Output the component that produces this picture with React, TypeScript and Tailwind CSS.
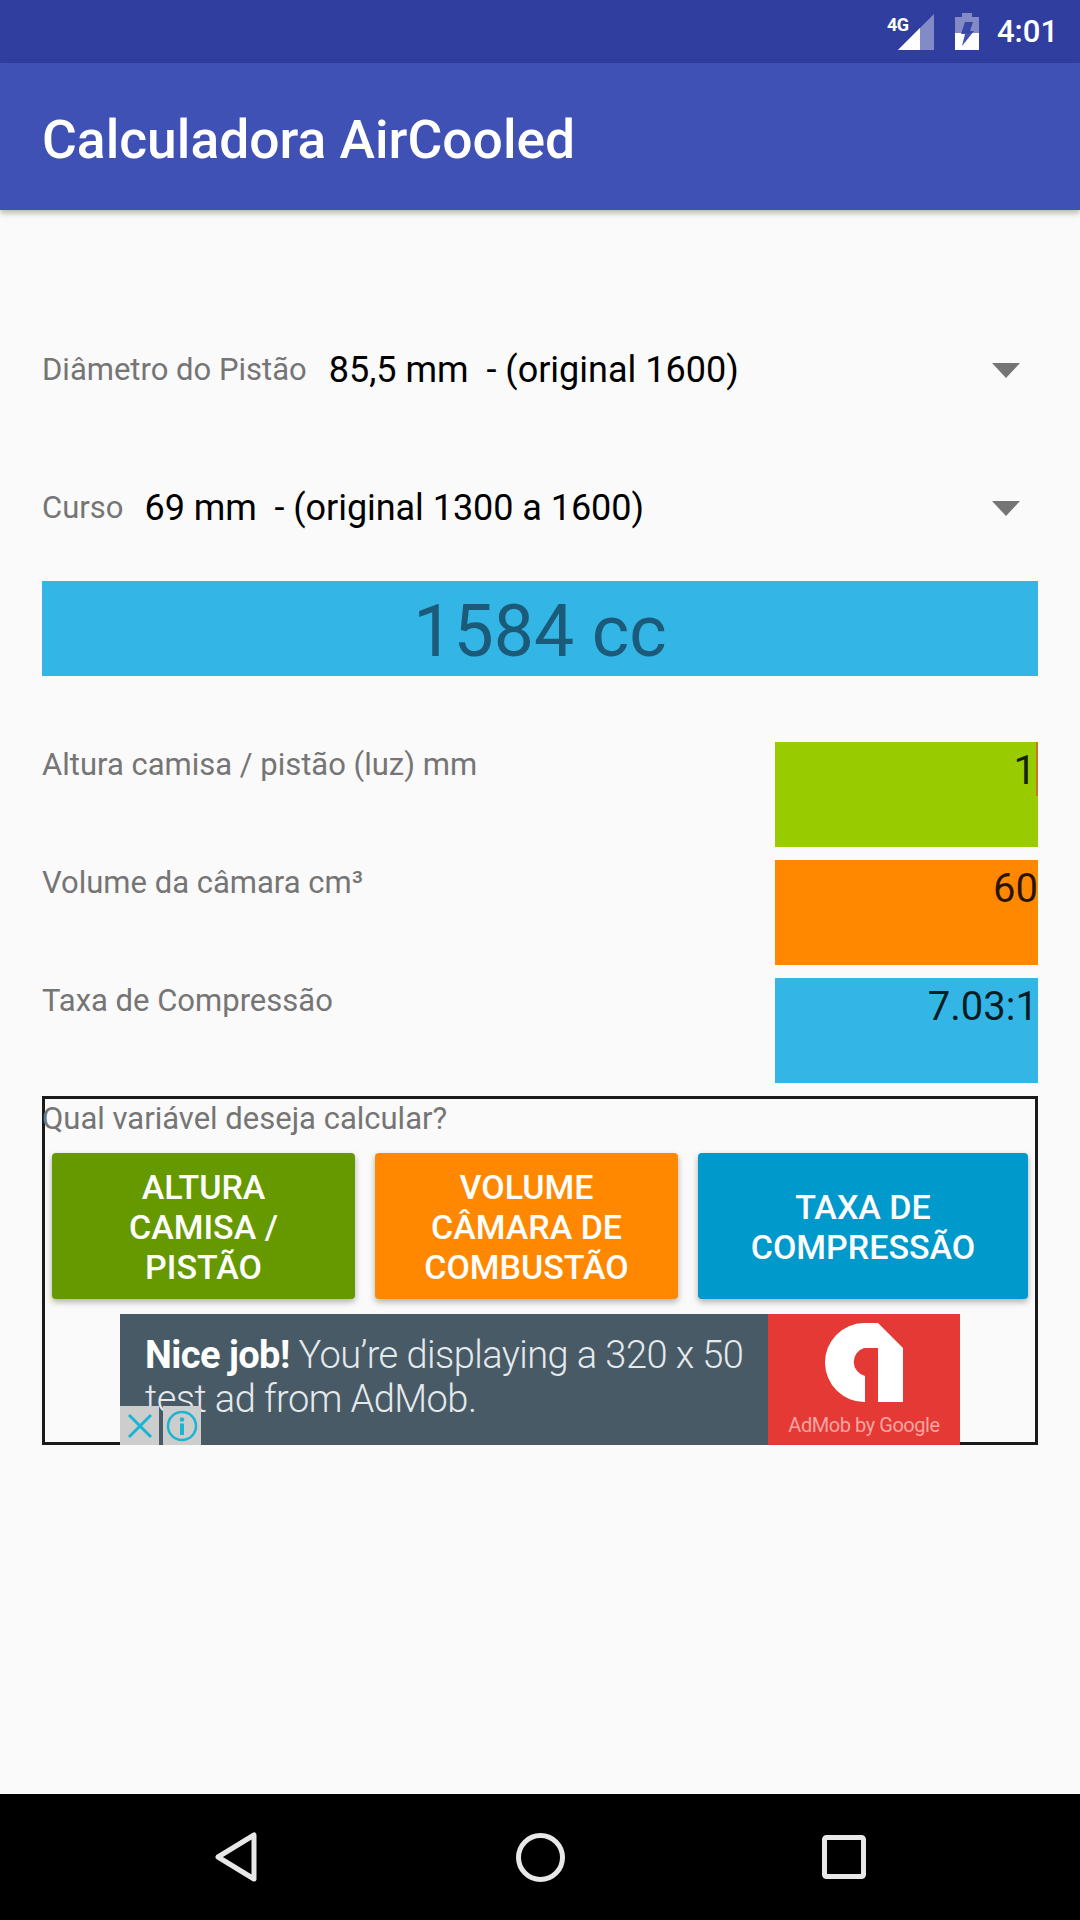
const Arrow = () => (
  <svg width="28" height="15" viewBox="0 0 28 15" className="ml-auto mr-[18px] shrink-0">
    <path d="M0 0H28L14 15Z" fill="#757575" />
  </svg>
);

const SpinnerRow = ({ label, value, gap }: { label: string; value: string; gap: string }) => (
  <div className="flex h-[138px] items-center">
    <span className="text-[31px] text-[#757575]">{label}</span>
    <span className={`whitespace-pre text-[36px] text-black ${gap}`}>{value}</span>
    <Arrow />
  </div>
);

const InputRow = ({ label, value, bg, cursor }: { label: string; value: string; bg: string; cursor?: boolean }) => (
  <div className="flex h-[105px] justify-between">
    <span className="pt-[3px] text-[31px] leading-[40px] text-[#757575]">{label}</span>
    <div className={`relative h-[105px] w-[263px] text-right text-[40px] leading-[58px] text-black/85 ${bg}`}>
      <span className={cursor ? 'pr-[2px]' : ''}>{value}</span>
      {cursor && <div className="absolute right-0 top-0 h-[54px] w-[2px] bg-[#c9772c]" />}
    </div>
  </div>
);

const ActionButton = ({ lines, bg, width }: { lines: string[]; bg: string; width: string }) => (
  <div className={`flex h-[146px] flex-col items-center justify-center rounded-[4px] pt-[2px] text-[34px] font-medium leading-[40px] text-white shadow-[0_3px_6px_rgba(0,0,0,0.3)] ${bg} ${width}`}>
    {lines.map((line) => (
      <span key={line}>{line}</span>
    ))}
  </div>
);

const AdBanner = () => (
  <div className="relative mx-auto mt-[15px] flex h-[131px] w-[840px] overflow-hidden bg-[#485a65]">
    <div className="w-[648px] pl-[25px] pt-[19px] text-[38px] font-light leading-[44px] tracking-[-0.55px] text-[#e4e9ec]">
      <span className="font-bold text-white">Nice job!</span> You’re displaying a 320 x 50
      <br />
      test ad from AdMob.
    </div>
    <div className="flex w-[192px] flex-col items-center bg-[#e53935] pt-[9px]">
      <svg width="78" height="79" viewBox="0 0 78 79">
        <path d="M39 0H53L78 25V79H53V25H39A14.5 14.5 0 0 0 40 53V79A39.5 39.5 0 0 1 39 0Z" fill="#fff" />
      </svg>
      <span className="mt-[10px] whitespace-nowrap text-[20px] leading-[26px] tracking-[-0.45px] text-[#f5a5a0]">
        AdMob by Google
      </span>
    </div>
    <div className="absolute bottom-0 left-0 flex h-[39px] gap-[4px]">
      <div className="flex w-[39px] items-center justify-center bg-[#cdcdcd]">
        <svg width="26" height="26" viewBox="0 0 26 26">
          <path d="M2 2L24 24M24 2L2 24" stroke="#19b5d2" strokeWidth="3" fill="none" />
        </svg>
      </div>
      <div className="flex w-[38px] items-center justify-center bg-[#cdcdcd]">
        <svg width="32" height="32" viewBox="0 0 32 32">
          <circle cx="16" cy="16" r="14" stroke="#19b5d2" strokeWidth="2.5" fill="none" />
          <circle cx="16" cy="9.5" r="2.2" fill="#19b5d2" />
          <rect x="14" y="13.5" width="4" height="11.5" fill="#19b5d2" />
        </svg>
      </div>
    </div>
  </div>
);

export default function App() {
  return (
    <div className="flex h-[1920px] w-[1080px] flex-col overflow-hidden bg-[#fafafa] font-['Roboto',sans-serif]">
      <div className="flex h-[63px] shrink-0 items-center justify-end bg-[#303f9f] pr-[22px] text-white">
        <div className="relative mr-[21px] h-[36px] w-[46px]">
          <span className="absolute left-[-1px] top-[1px] text-[18px] font-bold leading-[20px] tracking-[-0.6px]">4G</span>
          <svg width="36" height="36" viewBox="0 0 36 36" className="absolute bottom-0 right-0">
            <path d="M36 0V36H0Z" fill="#fff" fillOpacity="0.4" />
            <path d="M22 14V36H0Z" fill="#fff" />
          </svg>
        </div>
        <svg width="24" height="37" viewBox="0 0 24 37" className="mr-[18px]">
          <path d="M7 0H17V4H24V37H0V4H7Z" fill="#fff" fillOpacity="0.4" />
          <path d="M0 20H24V37H0Z" fill="#fff" />
          <path d="M10 9H18L15 18H19L7 33L10 21H6Z" fill="#303f9f" fillOpacity="0.9" />
        </svg>
        <span className="text-[31px] font-medium leading-none">4:01</span>
      </div>

      <div className="relative z-10 flex h-[147px] shrink-0 items-center bg-[#3f51b5] pl-[42px] pt-[7px] text-[53.4px] font-medium text-white shadow-[0_3px_6px_rgba(0,0,0,0.28)]">
        Calculadora AirCooled
      </div>

      <div className="flex-1 px-[42px] pt-[91px]">
        <SpinnerRow label="Diâmetro do Pistão" value="85,5 mm  - (original 1600)" gap="ml-[22px]" />
        <SpinnerRow label="Curso" value="69 mm  - (original 1300 a 1600)" gap="ml-[21px] tracking-[-0.05px]" />
        <div className="mt-[4px] flex h-[95px] items-center justify-center bg-[#33b5e5] pt-[7px] text-[71.5px] text-[#1b5a78]">
          1584 cc
        </div>

        <div className="mt-[66px] flex flex-col gap-[13px]">
          <InputRow label="Altura camisa / pistão (luz) mm" value="1" bg="bg-[#99cc00]" cursor />
          <InputRow label="Volume da câmara cm³" value="60" bg="bg-[#ff8800]" />
          <InputRow label="Taxa de Compressão" value="7.03:1" bg="bg-[#33b5e5]" />
        </div>

        <div className="mt-[13px] h-[349px] border-[3px] border-[#1a1a1a]">
          <p className="-ml-[3px] text-[31px] leading-[40px] text-[#757575]">Qual variável deseja calcular?</p>
          <div className="ml-[7px] mt-[14px] flex gap-[20px]">
            <ActionButton lines={['ALTURA', 'CAMISA /', 'PISTÃO']} bg="bg-[#669900]" width="w-[303px]" />
            <ActionButton lines={['VOLUME', 'CÂMARA DE', 'COMBUSTÃO']} bg="bg-[#ff8800]" width="w-[303px]" />
            <ActionButton lines={['TAXA DE', 'COMPRESSÃO']} bg="bg-[#0099cc]" width="w-[330px]" />
          </div>
          <AdBanner />
        </div>
      </div>

      <div className="flex h-[126px] shrink-0 items-center bg-black pl-[215px]">
        <svg width="42" height="50" viewBox="0 0 42 50">
          <path d="M39 3V47L3 25Z" stroke="#e8e8e8" strokeWidth="5" strokeLinejoin="round" fill="none" />
        </svg>
        <svg width="49" height="49" viewBox="0 0 49 49" className="ml-[259px]">
          <circle cx="24.5" cy="24.5" r="22" stroke="#e8e8e8" strokeWidth="5" fill="none" />
        </svg>
        <svg width="44" height="44" viewBox="0 0 44 44" className="ml-[257px]">
          <rect x="2.5" y="2.5" width="39" height="39" rx="2" stroke="#e8e8e8" strokeWidth="5" fill="none" />
        </svg>
      </div>
    </div>
  );
}
